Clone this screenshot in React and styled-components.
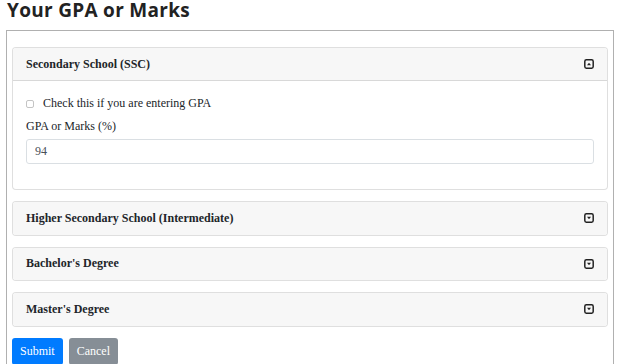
import React, { useState } from "react";
import styled, { createGlobalStyle } from "styled-components";

const GlobalStyle = createGlobalStyle`
  body {
    margin: 0;
    background: #fff;
    font-family: "Liberation Serif", "Times New Roman", serif;
    color: #212529;
  }
  * {
    box-sizing: border-box;
  }
`;

const Title = styled.h3`
  margin: 0 0 10px 0;
  padding-left: 7px;
  font-family: "Open Sans", "DejaVu Sans", sans-serif;
  font-weight: 700;
  font-size: 19px;
  line-height: 20px;
  letter-spacing: 0.3px;
  color: #222;
`;

const Frame = styled.div`
  margin: 0 10px 0 6px;
  border: 1px solid #b0b0b0;
  border-bottom: none;
  padding: 16px 5px 0 5px;
  min-height: 334px;
`;

const Card = styled.div`
  border: 1px solid rgba(0, 0, 0, 0.125);
  border-radius: 4px;
  margin-bottom: 11px;
  background: #fff;
  overflow: hidden;
`;

const CardHeader = styled.div`
  display: flex;
  align-items: center;
  justify-content: space-between;
  height: ${p => (p.$open ? "33px" : "32.5px")};
  padding: 0 13px;
  background: #f7f7f7;
  border-bottom: ${p => (p.$open ? "1px solid rgba(0, 0, 0, 0.125)" : "none")};
  font-weight: 700;
  font-size: 12px;
  cursor: pointer;
`;

const CardBody = styled.div`
  padding: 14px 13px;
`;

const CheckRow = styled.label`
  display: flex;
  align-items: center;
  font-size: 12px;
  line-height: 17px;
  margin-bottom: 6px;
`;

const Box = styled.span`
  display: inline-block;
  width: 8px;
  height: 8px;
  margin: 0 9px 0 0;
  border: 1px solid #c4c4c4;
  border-radius: 2px;
  background: #fff;
`;

const Label = styled.div`
  font-size: 12px;
  line-height: 17px;
  margin-bottom: 4px;
`;

const Input = styled.input`
  display: block;
  width: 100%;
  height: 25px;
  padding: 0 8px;
  border: 1px solid #dadfe3;
  border-radius: 3px;
  font-family: "Liberation Serif", "Times New Roman", serif;
  font-size: 12px;
  color: #495057;
  margin-bottom: 11px;
  outline: none;
`;

const Actions = styled.div`
  display: flex;
  gap: 6px;
  margin-top: 1px;
`;

const Button = styled.button`
  height: 27px;
  padding: 0 8px;
  border: none;
  border-radius: 3px;
  font-family: "Liberation Serif", "Times New Roman", serif;
  font-size: 12px;
  color: #fff;
  background: ${p => (p.$variant === "secondary" ? "#868e96" : "#007bff")};
  cursor: pointer;
`;

const ToggleIcon = ({ up }) => (
  <svg width="10" height="10" viewBox="0 0 10 10">
    <rect
      x="0.8"
      y="0.8"
      width="8.4"
      height="8.4"
      rx="1.6"
      fill="none"
      stroke="#222"
      strokeWidth="1.5"
    />
    <polygon
      points={up ? "3,6.2 7,6.2 5,3.8" : "3,3.8 7,3.8 5,6.2"}
      fill="#222"
    />
  </svg>
);

const sections = [
  "Secondary School (SSC)",
  "Higher Secondary School (Intermediate)",
  "Bachelor's Degree",
  "Master's Degree"
];

export default function App() {
  const [open, setOpen] = useState(0);

  return (
    <>
      <GlobalStyle />
      <Title>Your GPA or Marks</Title>
      <Frame>
        {sections.map((name, i) => (
          <Card key={name}>
            <CardHeader
              $open={open === i}
              onClick={() => setOpen(open === i ? -1 : i)}
            >
              <span>{name}</span>
              <ToggleIcon up={open === i} />
            </CardHeader>
            {open === i && (
              <CardBody>
                <CheckRow>
                  <Box />
                  Check this if you are entering GPA
                </CheckRow>
                <Label>GPA or Marks (%)</Label>
                <Input defaultValue="94" />
              </CardBody>
            )}
          </Card>
        ))}
        <Actions>
          <Button>Submit</Button>
          <Button $variant="secondary">Cancel</Button>
        </Actions>
      </Frame>
    </>
  );
}
